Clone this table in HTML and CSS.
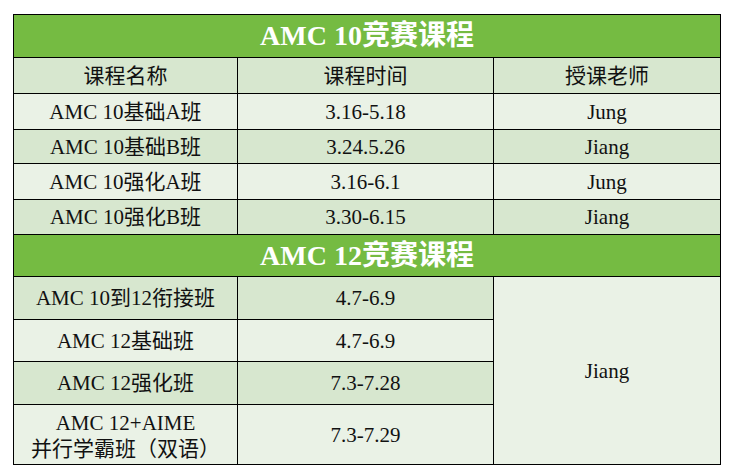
FILE: index.html
```html
<!DOCTYPE html>
<html lang="zh">
<head>
<meta charset="utf-8">
<link rel="stylesheet" href="styles.css">
</head>
<body>
<div class="sheet">
  <div class="cell title">AMC 10竞赛课程</div>
  <div class="cell dark">课程名称</div>
  <div class="cell dark">课程时间</div>
  <div class="cell dark">授课老师</div>

  <div class="cell light">AMC 10基础A班</div>
  <div class="cell light">3.16-5.18</div>
  <div class="cell light">Jung</div>

  <div class="cell dark">AMC 10基础B班</div>
  <div class="cell dark">3.24.5.26</div>
  <div class="cell dark">Jiang</div>

  <div class="cell light">AMC 10强化A班</div>
  <div class="cell light">3.16-6.1</div>
  <div class="cell light">Jung</div>

  <div class="cell dark">AMC 10强化B班</div>
  <div class="cell dark">3.30-6.15</div>
  <div class="cell dark">Jiang</div>

  <div class="cell title">AMC 12竞赛课程</div>

  <div class="cell dark">AMC 10到12衔接班</div>
  <div class="cell dark">4.7-6.9</div>
  <div class="cell light teacher">Jiang</div>

  <div class="cell light">AMC 12基础班</div>
  <div class="cell light">4.7-6.9</div>

  <div class="cell dark">AMC 12强化班</div>
  <div class="cell dark">7.3-7.28</div>

  <div class="cell light two">AMC 12+AIME<br>并行学霸班（双语）</div>
  <div class="cell light">7.3-7.29</div>
</div>
</body>
</html>
```

FILE: styles.css
```css
html, body {
  margin: 0;
  padding: 0;
  background: #ffffff;
}

body {
  padding: 14px 0 0 13px;
}

.sheet {
  display: grid;
  width: 706px;
  grid-template-columns: 223px 255px 226px;
  grid-template-rows: 42px 35px 35px 33px 35px 34px 41px 42px 41px 42px 59px;
  gap: 1px;
  padding: 1px;
  background: #000000;
  font-family: "Liberation Serif", "Noto Sans CJK SC", serif;
  font-size: 21px;
  color: #111111;
}

.cell {
  display: flex;
  align-items: center;
  justify-content: center;
  text-align: center;
  line-height: 26px;
}

.title {
  grid-column: 1 / 4;
  background: #75bb42;
  color: #ffffff;
  font-weight: bold;
  font-size: 28px;
}

.dark {
  background: #d7e7cf;
}

.light {
  background: #eaf2e6;
}

.teacher {
  grid-column: 3;
  grid-row: 8 / 12;
}

.two {
  padding-top: 2px;
}
```
